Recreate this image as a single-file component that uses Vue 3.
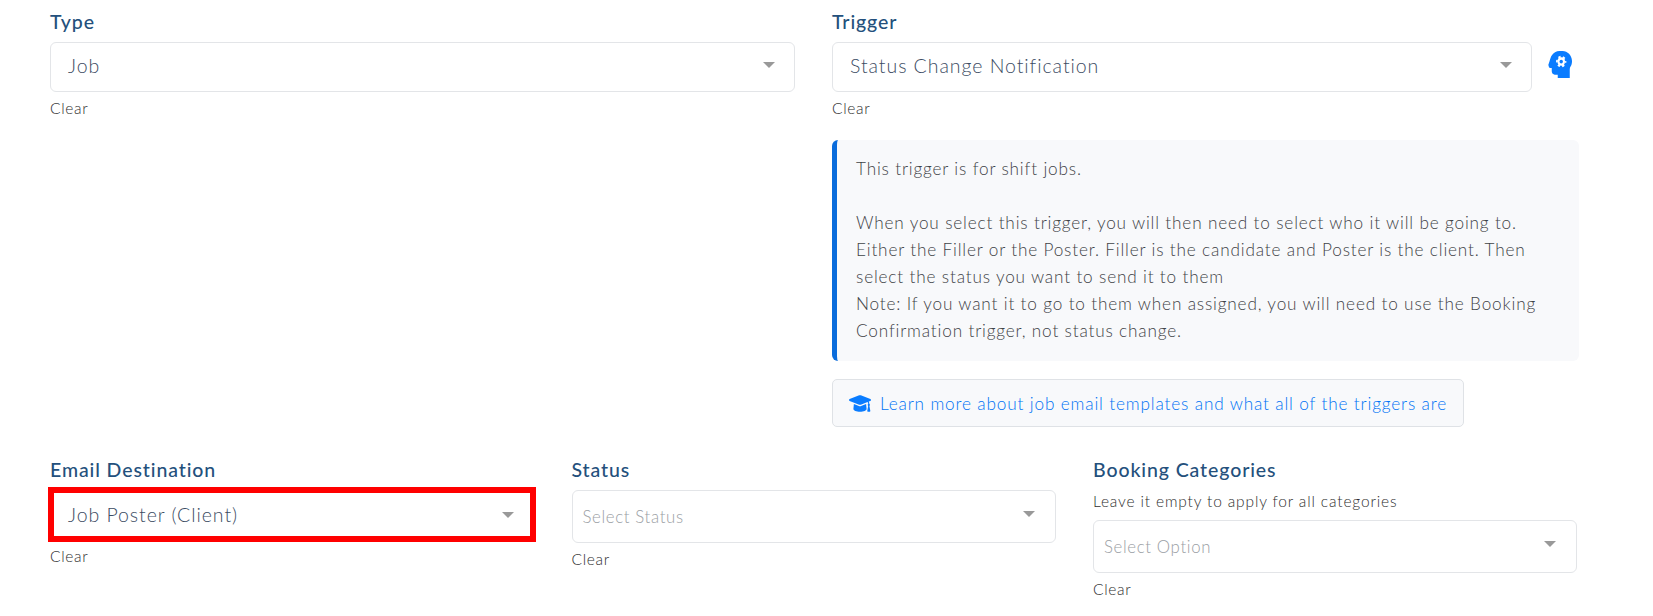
<script setup>
const paragraphs = [
  'This trigger is for shift jobs.',
  '',
  'When you select this trigger, you will then need to select who it will be going to.',
  'Either the Filler or the Poster. Filler is the candidate and Poster is the client. Then',
  'select the status you want to send it to them',
  'Note: If you want it to go to them when assigned, you will need to use the Booking',
  'Confirmation trigger, not status change.'
]
</script>

<template>
  <div class="page">
    <div class="top">
      <section class="field">
        <h3 class="label">Type</h3>
        <div class="select big"><span class="value">Job</span><i class="caret"></i></div>
        <a class="clear">Clear</a>
      </section>
      <section class="field">
        <h3 class="label">Trigger</h3>
        <div class="with-icon">
          <div class="select big grow"><span class="value">Status Change Notification</span><i class="caret"></i></div>
          <svg class="head" viewBox="0 0 512 512" preserveAspectRatio="none" aria-hidden="true">
            <path fill="#0a7cff" transform="matrix(-1 0 0 1 512 0)" d="M509.21 275c-20.94-47.12-48.44-151.73-73.08-186.75C397.68 33.6 334.18 0 266.09 0H200C95.47 0 4.81 80.08.14 184.5-1.77 227.22 11 267 33.7 300.68 47.23 320.74 48 345.33 48 368.33V512h256v-64h64c35.34 0 64-28.65 64-64v-64h32c23.16 0 38.6-23.94 29.21-45z"/>
            <circle cx="282" cy="200" r="92" fill="none" stroke="#fff" stroke-width="36" stroke-dasharray="48 48.3" stroke-dashoffset="24"/>
            <circle cx="282" cy="200" r="80" fill="#fff"/>
            <circle cx="282" cy="200" r="36" fill="#0a7cff"/>
          </svg>
        </div>
        <a class="clear">Clear</a>
        <div class="alert">
          <p v-for="(line, i) in paragraphs" :key="i" class="line">{{ line || '\u00a0' }}</p>
        </div>
        <a class="learn">
          <svg class="cap" viewBox="0 60 640 395" preserveAspectRatio="none" aria-hidden="true">
            <path fill="#0a7cff" transform="matrix(-1 0 0 1 640 0)" d="M622.34 153.2L343.4 67.5c-15.2-4.67-31.6-4.67-46.79 0L17.66 153.2c-23.54 7.23-23.54 38.36 0 45.59l48.63 14.94c-10.67 13.19-17.23 29.28-17.88 46.9C38.78 266.15 32 276.11 32 288c0 10.78 5.68 19.85 13.86 25.65L20.33 428.53C18.11 438.52 25.71 448 35.94 448h56.11c10.24 0 17.84-9.48 15.62-19.47L82.14 313.65C90.32 307.85 96 298.78 96 288c0-11.57-6.47-21.25-15.66-26.87.76-15.02 8.44-28.3 20.69-36.72L296.6 284.5c9.06 2.78 26.44 6.25 46.79 0l278.95-85.7c23.55-7.24 23.55-38.36 0-45.6zM352.79 315.09c-28.53 8.76-52.84 3.92-65.59 0l-145.02-44.55L128 384c0 35.35 85.96 64 192 64s192-28.65 192-64l-14.18-113.47-145.03 44.56z"/>
          </svg>
          <span>Learn more about job email templates and what all of the triggers are</span>
        </a>
      </section>
    </div>
    <div class="bottom">
      <section class="field">
        <h3 class="label">Email Destination</h3>
        <div class="select big marked"><span class="value">Job Poster (Client)</span><i class="caret"></i></div>
        <a class="clear clear-marked">Clear</a>
      </section>
      <section class="field">
        <h3 class="label">Status</h3>
        <div class="select tall"><span class="placeholder">Select Status</span><i class="caret"></i></div>
        <a class="clear">Clear</a>
      </section>
      <section class="field">
        <h3 class="label">Booking Categories</h3>
        <p class="hint">Leave it empty to apply for all categories</p>
        <div class="select tall"><span class="placeholder">Select Option</span><i class="caret"></i></div>
        <a class="clear">Clear</a>
      </section>
    </div>
  </div>
</template>

<style>
html, body { background: #fff; }
</style>

<style scoped>
.page {
  box-sizing: border-box;
  width: 1653px;
  height: 616px;
  overflow: hidden;
  padding: 10px 74px 0 50px;
  font-family: Lato, "Noto Sans", sans-serif;
}
.top { display: grid; grid-template-columns: 745px 747px; column-gap: 37px; }
.bottom { display: grid; grid-template-columns: 484px 484px 484px; column-gap: 37.5px; margin-top: 31px; }
.field { min-width: 0; }
.label {
  margin: 0 0 9px;
  font-size: 19.5px;
  line-height: 23px;
  font-weight: 500;
  color: #24507c;
  letter-spacing: 0.9px;
}
.select {
  box-sizing: border-box;
  position: relative;
  display: flex;
  align-items: center;
  border: 1px solid #e3e5e8;
  border-radius: 6px;
  background: #fff;
}
.big { height: 50px; padding: 0 0 4px 17px; }
.tall { height: 53px; padding-left: 10px; }
.grow { flex: 1; }
.marked {
  border: 6px solid #f00;
  border-radius: 0;
  height: 55px;
  margin: -3px 0 0 -2px;
  width: 488px;
  padding: 0 0 1px 14px;
}
.value { font-size: 19.5px; color: #3c4c63; letter-spacing: 0.95px; font-weight: 300; }
.placeholder { font-size: 16.8px; color: #9a9ea4; letter-spacing: 0.65px; font-weight: 300; }
.caret {
  position: absolute;
  right: 19px;
  top: 50%;
  margin-top: -5px;
  border-left: 6px solid transparent;
  border-right: 6px solid transparent;
  border-top: 6px solid #999;
}
.marked .caret { margin-top: -3px; right: 16px; }
.tall .caret { right: 20px; margin-top: -6px; }
.clear {
  display: block;
  margin-top: 5px;
  font-size: 15.5px;
  line-height: 22px;
  color: #2e2e2e;
  letter-spacing: 0.7px;
  font-weight: 300;
}
.clear-marked { margin-top: 3px; }
.with-icon { display: flex; align-items: center; gap: 16px; padding-right: 7px; }
.head { width: 24px; height: 27px; margin-top: -6px; }
.alert {
  margin-top: 21px;
  box-sizing: border-box;
  height: 221px;
  padding: 15px 19px;
  background: #f8f9fb;
  border-left: 5px solid #0a6cdc;
  border-radius: 6px;
}
.line {
  margin: 0;
  font-size: 17.2px;
  line-height: 27px;
  color: #3f4347;
  letter-spacing: 0.83px;
  font-weight: 300;
  white-space: nowrap;
}
.learn {
  margin-top: 18px;
  box-sizing: border-box;
  width: 632px;
  height: 48px;
  display: flex;
  align-items: center;
  gap: 9px;
  padding-left: 16px;
  border: 1px solid #dfe2e6;
  border-radius: 5px;
  background: #f8f9fb;
  color: #0073f5;
  font-size: 17.2px;
  letter-spacing: 0.85px;
  font-weight: 300;
  white-space: nowrap;
}
.cap { width: 22px; height: 17px; flex: none; }
.hint {
  margin: 0 0 8px;
  font-size: 15.5px;
  line-height: 22px;
  color: #2e2e2e;
  letter-spacing: 0.85px;
  font-weight: 300;
}
</style>
